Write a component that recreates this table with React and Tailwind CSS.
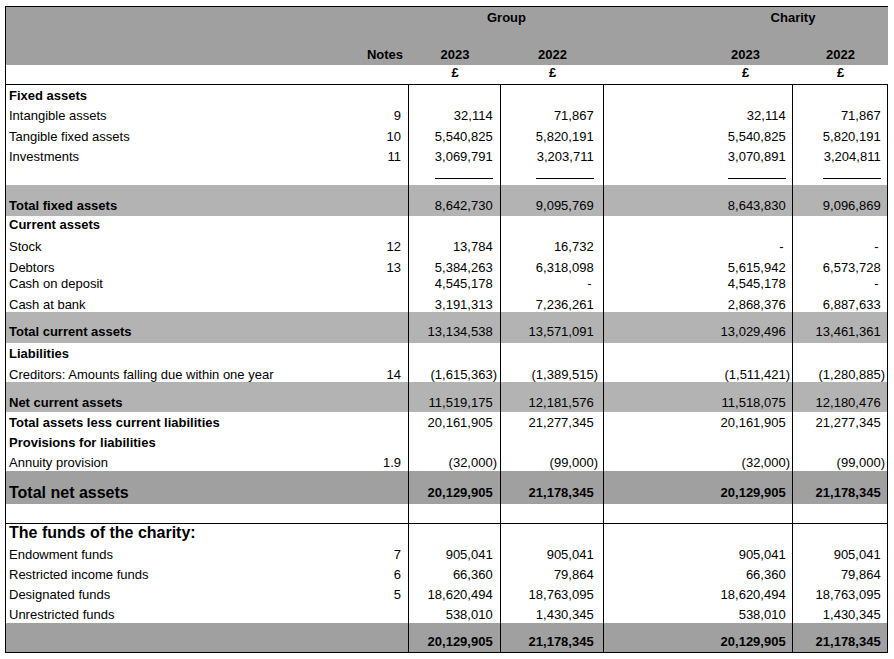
const COLS = "grid grid-cols-[345px_58px_92px_103px_94px_95px_95px]";

const rows = [
  { kind: "head", label: "Fixed assets", h: "h-[20px]", pt: "pt-[3px]" },
  { label: "Intangible assets", note: "9", v: ["32,114", "71,867", "32,114", "71,867"], h: "h-[21px]", pt: "pt-[3px]" },
  { label: "Tangible fixed assets", note: "10", v: ["5,540,825", "5,820,191", "5,540,825", "5,820,191"], h: "h-[20px]", pt: "pt-[3px]" },
  { label: "Investments", note: "11", v: ["3,069,791", "3,203,711", "3,070,891", "3,204,811"], h: "h-[20px]", pt: "pt-[3px]" },
  { kind: "rule", h: "h-[19px]" },
  { label: "Total fixed assets", boldLabel: true, band: "bg-[#b3b3b3]", v: ["8,642,730", "9,095,769", "8,643,830", "9,096,869"], h: "h-[31px]", pt: "pt-[13px]" },
  { kind: "head", label: "Current assets", h: "h-[19px]", pt: "pt-[1px]" },
  { label: "Stock", note: "12", v: ["13,784", "16,732", "-", "-"], h: "h-[21px]", pt: "pt-[4px]" },
  { label: "Debtors", note: "13", v: ["5,384,263", "6,318,098", "5,615,942", "6,573,728"], h: "h-[20px]", pt: "pt-[4px]" },
  { label: "Cash on deposit", v: ["4,545,178", "-", "4,545,178", "-"], h: "h-[17px]", pt: "pt-0" },
  { label: "Cash at bank", v: ["3,191,313", "7,236,261", "2,868,376", "6,887,633"], h: "h-[19px]", pt: "pt-[4px]" },
  { label: "Total current assets", boldLabel: true, band: "bg-[#b3b3b3]", v: ["13,134,538", "13,571,091", "13,029,496", "13,461,361"], h: "h-[31px]", pt: "pt-[12px]" },
  { kind: "head", label: "Liabilities", h: "h-[20px]", pt: "pt-[3px]" },
  { label: "Creditors: Amounts falling due within one year", note: "14", v: ["(1,615,363)", "(1,389,515)", "(1,511,421)", "(1,280,885)"], h: "h-[19px]", pt: "pt-[4px]" },
  { label: "Net current assets", boldLabel: true, band: "bg-[#b3b3b3]", v: ["11,519,175", "12,181,576", "11,518,075", "12,180,476"], h: "h-[30px]", pt: "pt-[13px]" },
  { label: "Total assets less current liabilities", boldLabel: true, v: ["20,161,905", "21,277,345", "20,161,905", "21,277,345"], h: "h-[20px]", pt: "pt-[3px]" },
  { kind: "head", label: "Provisions for liabilities", h: "h-[20px]", pt: "pt-[3px]" },
  { label: "Annuity provision", note: "1.9", v: ["(32,000)", "(99,000)", "(32,000)", "(99,000)"], h: "h-[19px]", pt: "pt-[3px]" },
  { kind: "big", label: "Total net assets", band: "bg-[#a0a0a0]", boldNums: true, v: ["20,129,905", "21,178,345", "20,129,905", "21,178,345"], h: "h-[33px]", pt: "pt-[14px]", labelPt: "pt-[13px]" },
  { kind: "empty", h: "h-[20px]" },
  { kind: "bighead", label: "The funds of the charity:", h: "h-[20px]" },
  { label: "Endowment funds", note: "7", v: ["905,041", "905,041", "905,041", "905,041"], h: "h-[21px]", pt: "pt-[3px]" },
  { label: "Restricted income funds", note: "6", v: ["66,360", "79,864", "66,360", "79,864"], h: "h-[20px]", pt: "pt-[2px]" },
  { label: "Designated funds", note: "5", v: ["18,620,494", "18,763,095", "18,620,494", "18,763,095"], h: "h-[20px]", pt: "pt-[2px]" },
  { label: "Unrestricted funds", v: ["538,010", "1,430,345", "538,010", "1,430,345"], h: "h-[18px]", pt: "pt-[2px]" },
  { label: "", band: "bg-[#a0a0a0]", boldNums: true, v: ["20,129,905", "21,178,345", "20,129,905", "21,178,345"], h: "h-[29px]", pt: "pt-[11px]" },
];

// right padding per money column: group 2023, group 2022, charity 2023, charity 2022
const PADS = ["pr-[3px]", "pr-[5px]", "pr-[2px]", "pr-[2px]"];

function Amount({ v }) {
  if (!v) return null;
  if (v.startsWith("(")) return <span>{v}</span>;
  if (v === "-") {
    return (
      <span className="mr-[2px]">
        -<span className="invisible">)</span>
      </span>
    );
  }
  return (
    <span>
      {v}
      <span className="invisible">)</span>
    </span>
  );
}

function MoneyCells({ row }) {
  const cells = row.v || ["", "", "", ""];
  const weight = row.boldNums ? "font-bold" : "";
  const pt = row.pt || "";
  return (
    <>
      <div className={`border-r border-black text-right ${PADS[0]} ${pt} ${weight}`}>
        <Amount v={cells[0]} />
      </div>
      <div className={`border-r border-black text-right ${PADS[1]} ${pt} ${weight}`}>
        <Amount v={cells[1]} />
      </div>
      <div />
      <div className={`border-r border-black text-right ${PADS[2]} ${pt} ${weight}`}>
        <Amount v={cells[2]} />
      </div>
      <div className={`border-r border-black text-right ${PADS[3]} ${pt} ${weight}`}>
        <Amount v={cells[3]} />
      </div>
    </>
  );
}

function Rule({ pad }) {
  return (
    <div className={`border-r border-black pt-[12px] ${pad}`}>
      <div className="ml-auto mr-[4px] h-px w-[58px] bg-black" />
    </div>
  );
}

function Row({ row }) {
  const base = `${COLS} ${row.h} ${row.band || ""}`;

  if (row.kind === "rule") {
    return (
      <div className={base}>
        <div />
        <div className="border-r border-black" />
        <Rule pad={PADS[0]} />
        <Rule pad={PADS[1]} />
        <div />
        <Rule pad={PADS[2]} />
        <Rule pad={PADS[3]} />
      </div>
    );
  }

  if (row.kind === "empty") {
    return (
      <div className={`${base} border-b border-black`}>
        <div />
        <div className="border-r border-black" />
        <MoneyCells row={{}} />
      </div>
    );
  }

  if (row.kind === "bighead") {
    return (
      <div className={base}>
        <div className="pl-[3px] text-[16px] leading-[18px] font-bold">{row.label}</div>
        <div className="border-r border-black" />
        <MoneyCells row={{}} />
      </div>
    );
  }

  const labelCls =
    row.kind === "big"
      ? `pl-[3px] text-[16px] leading-[18px] font-bold ${row.labelPt}`
      : `pl-[3px] whitespace-nowrap ${row.pt} ${row.kind === "head" || row.boldLabel ? "font-bold" : ""}`;

  return (
    <div className={base}>
      <div className={labelCls}>{row.label}</div>
      <div className={`border-r border-black text-right pr-[7px] ${row.pt || ""}`}>{row.note}</div>
      <MoneyCells row={row} />
    </div>
  );
}

export default function App() {
  return (
    <div className="min-h-screen bg-white font-['Liberation_Sans',Arial,sans-serif] text-[13px] leading-[15px] text-black">
      <div className="ml-[5px] mt-[6px] w-[883px] border-l border-t border-b border-black">
        {/* header band */}
        <div className="h-[58px] bg-[#a0a0a0] font-bold">
          <div className={`${COLS} h-[40px] pt-[3px]`}>
            <div className="col-start-3 col-span-2 text-center">Group</div>
            <div className="col-start-6 col-span-2 text-center">Charity</div>
          </div>
          <div className={`${COLS} h-[18px]`}>
            <div />
            <div className="text-right pr-[6px]">Notes</div>
            <div className="text-center">2023</div>
            <div className="text-center">2022</div>
            <div />
            <div className="text-center">2023</div>
            <div className="text-center">2022</div>
          </div>
        </div>

        {/* currency row */}
        <div className={`${COLS} h-[20px] border-b border-black font-bold`}>
          <div />
          <div />
          <div className="text-center">£</div>
          <div className="text-center">£</div>
          <div />
          <div className="text-center">£</div>
          <div className="text-center">£</div>
        </div>

        {rows.map((row, i) => (
          <Row key={i} row={row} />
        ))}
      </div>
    </div>
  );
}
